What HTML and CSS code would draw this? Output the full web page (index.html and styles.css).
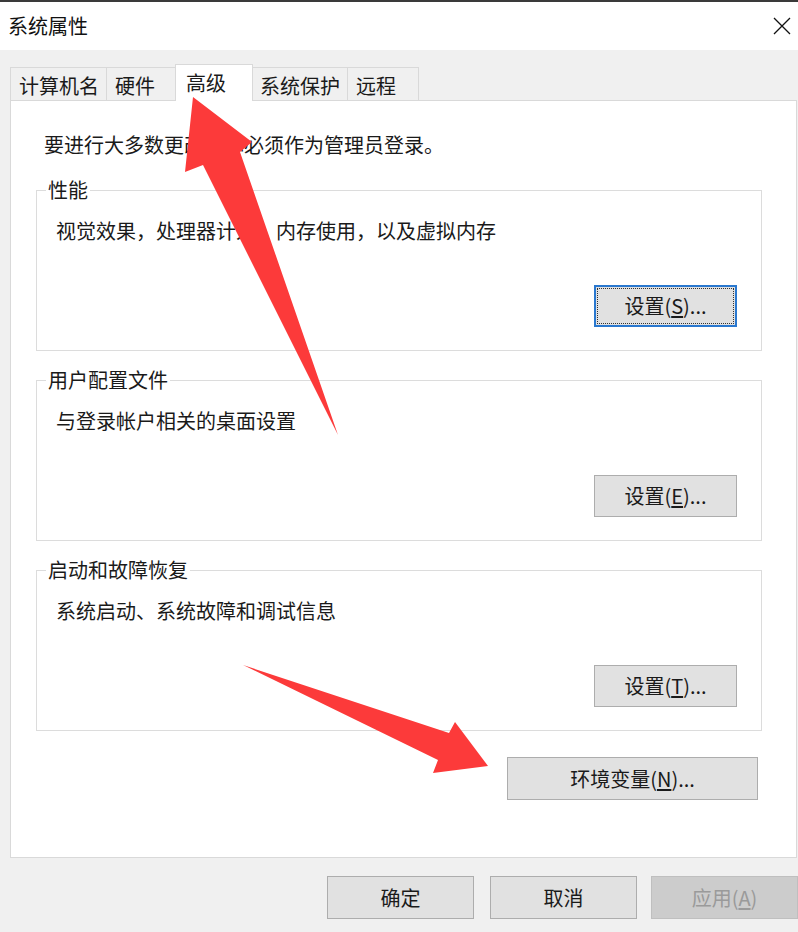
FILE: index.html
```html
<!DOCTYPE html>
<html lang="zh-CN">
<head>
<meta charset="utf-8">
<title>系统属性</title>
<link rel="stylesheet" href="styles.css">
</head>
<body>
<div class="window">
  <header class="titlebar">
    <span class="title">系统属性</span>
    <span class="close" aria-label="关闭">
      <svg width="18" height="18" viewBox="0 0 18 18"><path d="M1 1 L17 17 M17 1 L1 17" stroke="#111" stroke-width="1.3" fill="none"/></svg>
    </span>
  </header>

  <nav class="tabs">
    <span class="tab">计算机名</span>
    <span class="tab">硬件</span>
    <span class="tab active">高级</span>
    <span class="tab">系统保护</span>
    <span class="tab">远程</span>
  </nav>

  <main class="panel">
    <p class="intro">要进行大多数更改，你必须作为管理员登录。</p>

    <fieldset class="group">
      <legend>性能</legend>
      <p class="desc">视觉效果，处理器计划，内存使用，以及虚拟内存</p>
      <div class="actions"><button class="btn focused">设置(<u>S</u>)...</button></div>
    </fieldset>

    <fieldset class="group">
      <legend>用户配置文件</legend>
      <p class="desc">与登录帐户相关的桌面设置</p>
      <div class="actions"><button class="btn">设置(<u>E</u>)...</button></div>
    </fieldset>

    <fieldset class="group">
      <legend>启动和故障恢复</legend>
      <p class="desc">系统启动、系统故障和调试信息</p>
      <div class="actions"><button class="btn">设置(<u>T</u>)...</button></div>
    </fieldset>

    <div class="env-row"><button class="btn env">环境变量(<u>N</u>)...</button></div>
  </main>

  <footer class="footer">
    <button class="btn wide ok">确定</button>
    <button class="btn wide">取消</button>
    <button class="btn wide disabled">应用(<u>A</u>)</button>
  </footer>

  <svg class="annot" width="798" height="932" viewBox="0 0 798 932">
    <polygon fill="#fc3a3a" points="193,97 252,142 240,152 338,435 203,165 185,172"/>
    <polygon fill="#fc3a3a" points="243,665 449,733 455,722 488,766 433,773 438,760"/>
  </svg>
</div>
</body>
</html>
```

FILE: styles.css
```css
* { box-sizing: border-box; }

html, body {
  margin: 0;
  padding: 0;
}

body {
  width: 798px;
  height: 932px;
  overflow: hidden;
  background: #f0f0f0;
  font-family: "Noto Sans CJK SC", "Microsoft YaHei", "Noto Sans", sans-serif;
  color: #1a1a1a;
}

.window {
  position: relative;
  width: 798px;
  height: 932px;
}

.titlebar {
  height: 50px;
  background: #ffffff;
  border-top: 2px solid #3a3a3a;
  display: flex;
  align-items: center;
  justify-content: space-between;
  padding: 0 6px 0 8px;
}

.title {
  font-size: 20px;
  line-height: 26px;
  color: #111;
}

.close {
  display: flex;
  width: 18px;
  height: 18px;
  margin-right: 1px;
}

.tabs {
  display: flex;
  align-items: flex-end;
  padding-left: 10px;
  margin-top: 14px;
  height: 36px;
  position: relative;
  z-index: 1;
}

.tab {
  height: 33px;
  min-width: 72px;
  padding: 6px 7px 0 8px;
  font-size: 20px;
  line-height: 24px;
  background: #f0f0f0;
  border: 1px solid #d9d9d9;
  border-bottom: none;
  margin-right: -1px;
  white-space: nowrap;
  color: #1a1a1a;
}

.tab.active {
  height: 37px;
  min-width: 78px;
  margin: 0 -2px -1px -2px;
  padding: 6px 9px 0 10px;
  background: #ffffff;
  position: relative;
  z-index: 2;
}

.panel {
  margin-left: 10px;
  width: 787px;
  height: 758px;
  background: #ffffff;
  border: 1px solid #d9d9d9;
  padding: 0 34px 0 25px;
  display: flex;
  flex-direction: column;
}

.intro {
  margin: 32px 0 0 8px;
  font-size: 20px;
  line-height: 24px;
}

.group {
  margin: 17px 0 0 0;
  padding: 0 24px 23px 19px;
  border: 1px solid #dcdcdc;
  min-width: 0;
}

.intro + .group {
  margin-top: 21px;
}

.group legend {
  margin-left: -10px;
  padding: 0 2px;
  font-size: 20px;
  line-height: 24px;
}

.desc {
  margin: 17px 0 0 0;
  font-size: 20px;
  line-height: 24px;
}

.actions {
  display: flex;
  justify-content: flex-end;
  margin-top: 42px;
}

.btn {
  font-family: inherit;
  font-size: 20px;
  line-height: 24px;
  color: #1a1a1a;
  background: #e1e1e1;
  border: 1px solid #adadad;
  border-radius: 0;
  height: 42px;
  width: 143px;
  padding: 0;
  margin: 0;
}

.btn u {
  text-underline-offset: 2px;
}

.btn.focused {
  border: 2px solid #2a78cf;
  outline: 1px dotted #333;
  outline-offset: -4px;
}

.env-row {
  display: flex;
  justify-content: flex-end;
  margin: 26px 4px 0 0;
}

.btn.env {
  width: 251px;
  height: 43px;
}

.footer {
  display: flex;
  justify-content: flex-end;
  gap: 14px;
  padding-top: 18px;
}

.btn.wide {
  width: 147px;
  height: 43px;
}

.btn.ok {
  margin-right: 2px;
}

.btn.disabled {
  background: #cccccc;
  border-color: #bfbfbf;
  color: #9a9a9a;
}

.annot {
  position: absolute;
  left: 0;
  top: 0;
  pointer-events: none;
  z-index: 5;
}
```
